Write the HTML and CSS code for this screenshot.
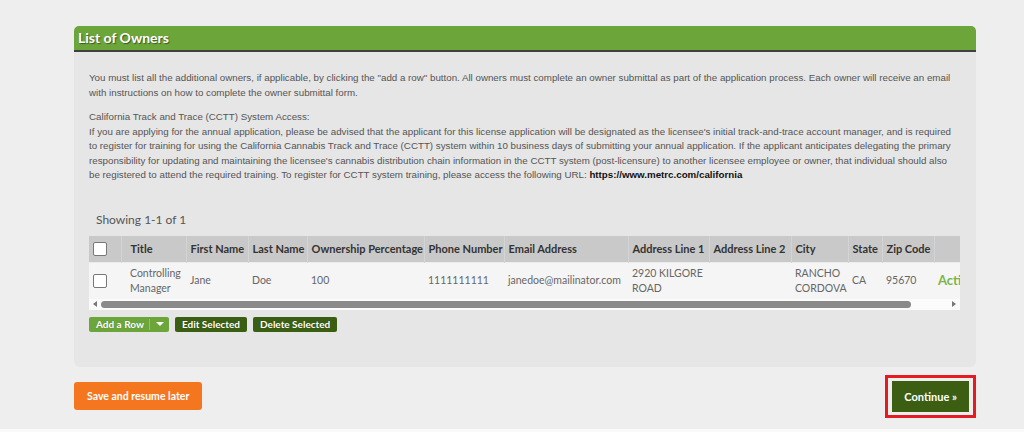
FILE: index.html
```html
<!DOCTYPE html>
<html lang="en">
<head>
	<meta charset="UTF-8">
	<title>List of Owners</title>
	<link rel="stylesheet" href="styles.css">
</head>
<body>
	<div class="page">
		<div class="panel">
			<div class="panel-head">List of Owners</div>
			<div class="panel-body">
				<p class="note">You must list all the additional owners, if applicable, by clicking the "add a row" button. All owners must complete an owner submittal as part of the application process. Each owner will receive an email with instructions on how to complete the owner submittal form.</p>
				<p class="note">California Track and Trace (CCTT) System Access:<br>If you are applying for the annual application, please be advised that the applicant for this license application will be designated as the licensee's initial track-and-trace account manager, and is required to register for training for using the California Cannabis Track and Trace (CCTT) system within 10 business days of submitting your annual application. If the applicant anticipates delegating the primary responsibility for updating and maintaining the licensee's cannabis distribution chain information in the CCTT system (post-licensure) to another licensee employee or owner, that individual should also be registered to attend the required training. To register for CCTT system training, please access the following URL: <b class="url">https://www.metrc.com/california</b></p>

				<div class="count">Showing 1-1 of 1</div>
				<div class="grid">
					<div class="grid-clip">
						<table class="owners">
							<colgroup>
								<col style="width:24px"><col style="width:8px"><col style="width:65px"><col style="width:62px"><col style="width:59px"><col style="width:117px"><col style="width:80px"><col style="width:124px"><col style="width:81px"><col style="width:82px"><col style="width:57px"><col style="width:34px"><col style="width:52px"><col style="width:70px">
							</colgroup>
							<thead>
								<tr>
									<th class="chk"><span class="box"></span></th>
									<th></th>
									<th class="first">Title</th>
									<th>First Name</th>
									<th>Last Name</th>
									<th>Ownership Percentage</th>
									<th>Phone Number</th>
									<th>Email Address</th>
									<th>Address Line 1</th>
									<th>Address Line 2</th>
									<th>City</th>
									<th>State</th>
									<th>Zip Code</th>
									<th></th>
								</tr>
							</thead>
							<tbody>
								<tr>
									<td class="chk"><span class="box"></span></td>
									<td></td>
									<td class="first">Controlling Manager</td>
									<td>Jane</td>
									<td>Doe</td>
									<td>100</td>
									<td>1111111111</td>
									<td>janedoe@mailinator.com</td>
									<td>2920 KILGORE ROAD</td>
									<td></td>
									<td>RANCHO CORDOVA</td>
									<td>CA</td>
									<td>95670</td>
									<td class="act">Actions</td>
								</tr>
							</tbody>
						</table>
					</div>
					<div class="hscroll">
						<span class="arrow left"></span>
						<span class="thumb"></span>
						<span class="arrow right"></span>
					</div>
				</div>

				<div class="grid-actions">
					<span class="btn btn-add">Add a Row<span class="split"></span><span class="caret"></span></span>
					<span class="btn btn-dark">Edit Selected</span>
					<span class="btn btn-dark">Delete Selected</span>
				</div>
			</div>
		</div>

		<div class="footer-actions">
			<span class="btn-save">Save and resume later</span>
			<span class="continue-frame"><span class="btn-continue">Continue &raquo;</span></span>
		</div>
	</div>
	<div class="bottom-strip"></div>
</body>
</html>
```

FILE: styles.css
```css
*{margin:0;padding:0;box-sizing:border-box;}
html,body{height:100%;}
body{background:#eeeeee;font-family:"Lato","Open Sans",sans-serif;color:#555;position:relative;overflow:hidden;}

.page{width:902px;margin-left:74px;padding-top:26px;}

.panel{background:#e6e6e6;border-radius:6px;}
.panel-head{height:26px;background:#6ca53a;border-bottom:2px solid #404040;border-radius:5px 5px 0 0;color:#fff;font-weight:700;font-size:14px;line-height:24px;padding-left:4px;text-shadow:1px 1px 1px rgba(0,0,0,.45);}
.panel-body{padding:19px 20px 35px 15px;}

.note{font-family:"Liberation Sans",Arial,sans-serif;font-size:9.75px;line-height:14.5px;color:#555;margin-bottom:10px;}
.note .url{color:#111;font-weight:700;}

.count{font-size:12px;color:#555;margin:29px 0 9px 7px;}

.grid{width:871px;}
.grid-clip{overflow:hidden;}
.owners{border-collapse:collapse;table-layout:fixed;width:915px;font-size:11px;}
.owners th{background:#c9c9c9;color:#333;font-weight:700;text-align:left;height:27px;padding:0 2px 0 4px;white-space:nowrap;border-left:1px solid #d4d4d4;}
.owners th:first-child,.owners th:nth-child(2){border-left:none;}
.owners td{background:#f5f5f5;color:#666;font-size:10.5px;height:36px;padding:0 2px 0 4px;line-height:15px;border-top:1px solid #ececec;}
.owners .first{padding-left:9px;}
.owners .chk{padding:0 0 0 4px;}
.owners .act{color:#7ab648;font-weight:700;font-size:13px;white-space:nowrap;}
.box{display:block;width:14px;height:14px;border:1px solid #777;border-radius:2px;background:#fff;}

.hscroll{display:flex;align-items:center;height:11px;background:#fbfbfb;padding:0 4px;}
.thumb{flex:1;height:7px;background:#8a8a8a;border-radius:4px;margin:0 41px 0 4px;}
.arrow{width:0;height:0;border-top:3px solid transparent;border-bottom:3px solid transparent;}
.arrow.left{border-right:4px solid #777;}
.arrow.right{border-left:4px solid #777;}

.grid-actions{display:flex;gap:6px;margin-top:7px;}
.btn{display:inline-flex;align-items:center;height:15px;padding:0 7px;border-radius:2px;color:#fff;font-size:10px;font-weight:700;text-shadow:0 0 1px rgba(0,0,0,.3);}
.btn-add{background:#6ca53a;padding-right:5px;}
.btn-add .split{width:1px;height:11px;background:#93c06a;margin:0 6px 0 5px;}
.btn-add .caret{width:0;height:0;border-left:4px solid transparent;border-right:4px solid transparent;border-top:4px solid #fff;}
.btn-dark{background:#3a5e12;padding:0 7px;}

.footer-actions{display:flex;justify-content:space-between;align-items:center;margin-top:8px;}
.btn-save{background:#f47720;color:#fff;font-weight:700;font-size:10.5px;height:28px;line-height:28px;padding:0 13px;border-radius:3px;}
.continue-frame{display:block;border:3px solid #e41b22;padding:3px 4px;}
.btn-continue{display:block;background:#3b5e12;color:#fff;font-weight:700;font-size:11px;height:31px;line-height:31px;padding:0 12px;}

.bottom-strip{position:absolute;left:0;right:0;bottom:0;height:3px;background:#f9f9f9;}
```
